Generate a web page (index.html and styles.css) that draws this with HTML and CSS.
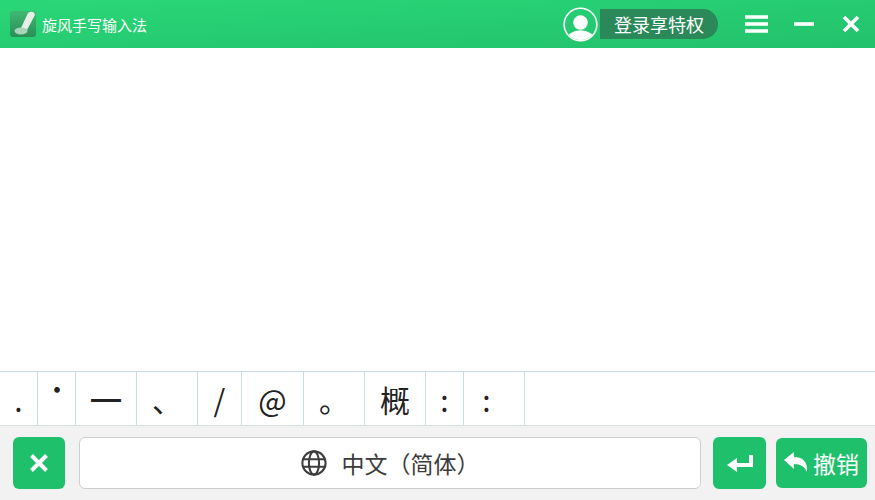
FILE: index.html
```html
<!DOCTYPE html>
<html lang="zh-CN">
<head>
  <meta charset="UTF-8">
  <title>旋风手写输入法</title>
  <link rel="stylesheet" href="styles.css">
</head>
<body>
  <div id="main">
    <header class="titlebar">
      <div class="brand">
        <svg class="logo" width="26" height="26" viewBox="0 0 26 26">
          <defs>
            <linearGradient id="logoBg" x1="0" y1="0" x2="0" y2="1">
              <stop offset="0" stop-color="#3fb872"/>
              <stop offset="1" stop-color="#2a8f56"/>
            </linearGradient>
          </defs>
          <rect width="26" height="26" rx="3" fill="url(#logoBg)"/>
          <path d="M11 17 L18 2 Q21 0 24 1.5 L25 4 L17 19 Z" fill="#e4efe8"/>
          <ellipse cx="11" cy="20" rx="6.5" ry="3.4" fill="#a9d3ba"/>
        </svg>
        <span class="brand-name">旋风手写输入法</span>
      </div>
      <div class="account">
        <svg class="avatar" width="35" height="35" viewBox="0 0 36 36">
          <defs><clipPath id="round"><circle cx="18" cy="18" r="16"/></clipPath></defs>
          <circle cx="18" cy="18" r="16.8" fill="none" stroke="#fff" stroke-width="1.6"/>
          <g clip-path="url(#round)" fill="#fff">
            <circle cx="18" cy="16" r="7.5"/>
            <ellipse cx="18" cy="33" rx="14" ry="9"/>
          </g>
        </svg>
        <span class="login">登录享特权</span>
      </div>
      <div class="window-btns">
        <svg width="23" height="20" viewBox="0 0 23 20"><path d="M0 3h23M0 10h23M0 17h23" stroke="#fff" stroke-width="3.4" fill="none"/></svg>
        <svg width="20" height="20" viewBox="0 0 20 20"><path d="M0 10h20" stroke="#fff" stroke-width="3.6" fill="none"/></svg>
        <svg class="close" width="18" height="18" viewBox="0 0 18 18"><path d="M2 2l14 14M16 2L2 16" stroke="#fff" stroke-width="3.6" fill="none"/></svg>
      </div>
    </header>

    <div class="canvas"></div>

    <div class="candidates">
      <div class="cand w38">.</div>
      <div class="cand w38 high">˙</div>
      <div class="cand w61 dash">—</div>
      <div class="cand w61">、</div>
      <div class="cand w44">/</div>
      <div class="cand w62">@</div>
      <div class="cand w61">。</div>
      <div class="cand w61">概</div>
      <div class="cand w38">:</div>
      <div class="cand w61 wide-colon">:</div>
    </div>

    <footer class="toolbar">
      <button class="btn btn-square">
        <svg width="20" height="20" viewBox="0 0 20 20"><path d="M2.5 2.5l15 15M17.5 2.5l-15 15" stroke="#fff" stroke-width="4" fill="none"/></svg>
      </button>
      <div class="lang">
        <svg width="26" height="26" viewBox="0 0 28 28" fill="none" stroke="#3c3c3c" stroke-width="2.2">
          <circle cx="14" cy="14" r="12.5"/>
          <ellipse cx="14" cy="14" rx="5.5" ry="12.5"/>
          <path d="M2 10h24M2 18h24"/>
        </svg>
        <span>中文（简体）</span>
      </div>
      <button class="btn btn-square btn-enter">
        <svg width="26" height="20" viewBox="0 0 26 20"><path d="M24 2v10H8" stroke="#fff" stroke-width="4" fill="none"/><path d="M0 12l10-7v14z" fill="#fff"/></svg>
      </button>
      <button class="btn btn-undo">
        <svg width="24" height="22" viewBox="0 0 24 22"><path d="M0 8l10-8v5c8 0 14 4 13 15-2-5-6-8-13-8v5z" fill="#fff"/></svg>
        <span>撤销</span>
      </button>
    </footer>
  </div>
</body>
</html>
```

FILE: styles.css
```css
body {
  margin: 0;
  font-family: "Noto Sans CJK SC", "Liberation Sans", sans-serif;
}
#main {
  width: 875px;
  height: 500px;
  display: flex;
  flex-direction: column;
  overflow: hidden;
}
.titlebar {
  height: 48px;
  display: flex;
  align-items: center;
  padding: 0 15px 0 10px;
  background: linear-gradient(to bottom right, #2ad777, #22c16c);
}
.brand {
  display: flex;
  align-items: center;
  gap: 6px;
  flex: 1;
}
.logo {
  display: block;
}
.brand-name {
  color: #fff;
  font-size: 15px;
}
.account {
  display: flex;
  align-items: center;
  gap: 2px;
  margin-right: 27px;
}
.avatar {
  display: block;
}
.login {
  height: 30px;
  line-height: 31px;
  padding: 0 14px;
  color: #fff;
  font-size: 18px;
  background: #2a8859;
  border-radius: 0 15px 15px 0;
}
.window-btns {
  display: flex;
  align-items: center;
  gap: 26px;
}
.window-btns svg {
  display: block;
}
.window-btns .close {
  margin-left: 2px;
}
.canvas {
  flex: 1;
  background: #fff;
}
.candidates {
  height: 54px;
  display: flex;
  box-sizing: border-box;
  background: #fff;
  border-top: 1px solid #c8dfe2;
}
.cand {
  box-sizing: border-box;
  display: flex;
  justify-content: center;
  align-items: center;
  color: #222;
  font-size: 30px;
  border-right: 1px solid #c8dfe2;
}
.high {
  padding-bottom: 22px;
  padding-left: 1px;
}
.dash {
  font-family: "Liberation Sans", sans-serif;
  font-weight: bold;
}
.wide-colon {
  padding-right: 15px;
}
.w38 { width: 38px; }
.w44 { width: 44px; }
.w61 { width: 61px; }
.w62 { width: 62px; }
.toolbar {
  height: 75px;
  box-sizing: border-box;
  display: flex;
  align-items: center;
  gap: 14px;
  padding: 0 8px 0 13px;
  background: #f2f2f2;
  border-top: 1px solid #d8dddd;
}
.btn {
  border: 0;
  padding: 0;
  display: flex;
  justify-content: center;
  align-items: center;
  color: #fff;
  background: #1fc06c;
  border-radius: 6px;
}
.btn-square {
  width: 52px;
  height: 52px;
}
.btn-enter {
  width: 53px;
  margin-left: -2px;
}
.lang {
  flex: 1;
  height: 52px;
  box-sizing: border-box;
  display: flex;
  justify-content: center;
  align-items: center;
  gap: 15px;
  color: #3c3c3c;
  font-size: 23px;
  background: #fff;
  border: 1px solid #cfcfcf;
  border-radius: 6px;
}
.btn-undo {
  width: 91px;
  height: 50px;
  margin-left: -4px;
  gap: 5px;
  font-size: 23px;
  font-family: inherit;
}
```
